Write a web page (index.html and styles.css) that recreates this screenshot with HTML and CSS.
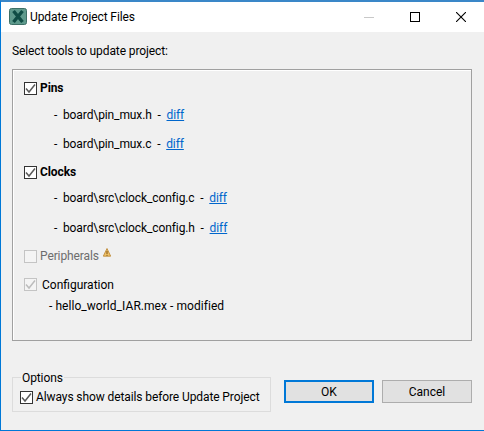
FILE: index.html
```html
<!DOCTYPE html>
<html lang="en">
<head>
    <meta charset="UTF-8">
    <title>Update Project Files</title>
    <link rel="stylesheet" href="styles.css">
</head>
<body>
    <div class="window">
        <div class="titlebar">
            <svg class="app-icon" width="18" height="17" viewBox="0 0 18 17">
                <rect x="0.5" y="0.5" width="17" height="16" rx="2" fill="#5e9a8c" stroke="#3d6f66"/>
                <path d="M4.5 3 L13.5 14 M13.5 3 L4.5 14" stroke="#0f4d45" stroke-width="3.4" fill="none"/>
            </svg>
            <span class="title">Update Project Files</span>
            <div class="win-buttons">
                <span class="win-btn"><svg width="10" height="10" viewBox="0 0 10 10"><path d="M0 5.5H10" stroke="#c8c8c8"/></svg></span>
                <span class="win-btn"><svg width="10" height="10" viewBox="0 0 10 10"><rect x="0.5" y="0.5" width="9" height="9" fill="none" stroke="#000"/></svg></span>
                <span class="win-btn"><svg width="10" height="10" viewBox="0 0 10 10"><path d="M0 0L10 10M10 0L0 10" stroke="#000" stroke-width="1.1"/></svg></span>
            </div>
        </div>

        <div class="content">
            <p class="intro">Select tools to update project:</p>

            <div class="tools">
                <div class="row check-row bold">
                    <span class="check"><svg width="13" height="13" viewBox="0 0 13 13"><path d="M2 6.5L5 10L11 2.5" stroke="#5a5a5a" stroke-width="1.5" fill="none"/></svg></span>
                    <span>Pins</span>
                </div>
                <div class="row file"><span>- &nbsp;board\pin_mux.h &nbsp;- &nbsp;<a href="#">diff</a></span></div>
                <div class="row file"><span>- &nbsp;board\pin_mux.c &nbsp;- &nbsp;<a href="#">diff</a></span></div>
                <div class="row check-row bold clocks">
                    <span class="check"><svg width="13" height="13" viewBox="0 0 13 13"><path d="M2 6.5L5 10L11 2.5" stroke="#5a5a5a" stroke-width="1.5" fill="none"/></svg></span>
                    <span>Clocks</span>
                </div>
                <div class="row file file-first"><span>- &nbsp;board\src\clock_config.c &nbsp;- &nbsp;<a href="#">diff</a></span></div>
                <div class="row file file-last"><span>- &nbsp;board\src\clock_config.h &nbsp;- &nbsp;<a href="#">diff</a></span></div>
                <div class="row check-row disabled">
                    <span class="check"></span>
                    <span>Peripherals</span>
                    <svg class="warn" width="8" height="9" viewBox="0 0 8 9"><path d="M4 0.5L7.7 8.2H0.3Z" fill="#f0c36a" stroke="#b9812c" stroke-width="0.8"/><path d="M4 3V6M4 6.8V7.8" stroke="#7a4f10"/></svg>
                </div>
                <div class="row check-row config">
                    <span class="check check-off"><svg width="13" height="13" viewBox="0 0 13 13"><path d="M2 6.5L5 10L11 2.5" stroke="#bcbcbc" stroke-width="1.5" fill="none"/></svg></span>
                    <span>Configuration</span>
                </div>
                <div class="row mex"><span>- hello_world_IAR.mex - modified</span></div>
            </div>

            <div class="footer">
                <div class="options">
                    <span class="legend">Options</span>
                    <div class="check-row always">
                        <span class="check"><svg width="13" height="13" viewBox="0 0 13 13"><path d="M2 6.5L5 10L11 2.5" stroke="#5a5a5a" stroke-width="1.5" fill="none"/></svg></span>
                        <span>Always show details before Update Project</span>
                    </div>
                </div>
                <button class="btn btn-default">OK</button>
                <button class="btn">Cancel</button>
            </div>
        </div>
    </div>
</body>
</html>
```

FILE: styles.css
```css
html, body {
    margin: 0;
    padding: 0;
}
body {
    width: 484px;
    height: 431px;
    overflow: hidden;
    font-family: Roboto, "Noto Sans", sans-serif;
    font-size: 12px;
    letter-spacing: -0.1px;
    color: #000;
    background-color: #f0f0f0;
}
.window {
    box-sizing: border-box;
    height: 431px;
    border-left: 1px solid #0078d7;
    border-top: 2px solid #3a87c8;
    border-bottom: 1px solid #0078d7;
}
.titlebar {
    height: 30px;
    background-color: #fff;
    display: flex;
    align-items: center;
    padding-left: 8px;
}
.app-icon {
    margin-right: 3px;
    margin-top: -1px;
}
.title {
    flex: 1;
}
.win-buttons {
    display: flex;
}
.win-btn {
    width: 46px;
    height: 30px;
    display: flex;
    align-items: center;
    justify-content: center;
}
.content {
    padding: 0 12px 0 11px;
}
.intro {
    margin: 0;
    height: 37px;
    line-height: 39px;
}
.tools {
    box-sizing: border-box;
    height: 272px;
    border: 1px solid #a0a0a0;
    box-shadow: inset 1px 1px 0 #fff;
    padding: 6px 0 0 11px;
}
.row {
    display: flex;
    align-items: center;
    white-space: nowrap;
    height: 24px;
}
.check-row {
    display: flex;
    align-items: center;
    white-space: nowrap;
}
.check {
    box-sizing: border-box;
    width: 13px;
    height: 13px;
    border: 1px solid #333;
    background-color: #fff;
    margin-right: 3px;
    display: flex;
    align-items: center;
    justify-content: center;
    flex-shrink: 0;
}
.check svg {
    flex-shrink: 0;
}
.bold {
    font-weight: bold;
}
.file {
    padding-left: 30px;
    height: 29px;
}
.file a {
    color: #0066cc;
}
.clocks {
    margin-top: 2px;
}
.file-first {
    height: 28px;
}
.file-last {
    height: 31px;
}
.disabled {
    margin-top: 1px;
    color: #6d6d6d;
}
.disabled .check, .check-off {
    border-color: #c4c4c4;
    background-color: #f4f4f4;
}
.warn {
    margin: -8px 0 0 4px;
}
.config {
    height: 29px;
    margin-top: 2px;
    letter-spacing: 0;
}
.config .check {
    margin-right: 5px;
}
.mex {
    padding-left: 25px;
    height: 14px;
    letter-spacing: 0.05px;
}
.footer {
    display: flex;
    align-items: flex-start;
    margin-top: 36px;
}
.options {
    box-sizing: border-box;
    position: relative;
    width: 259px;
    height: 35px;
    border: 1px solid #dcdcdc;
    padding: 12px 0 0 7px;
}
.legend {
    position: absolute;
    left: 8px;
    top: -8px;
    padding: 0 1px;
    line-height: 16px;
    background-color: #f0f0f0;
}
.btn {
    box-sizing: border-box;
    width: 90px;
    height: 23px;
    margin-top: 3px;
    padding: 0;
    font-family: inherit;
    font-size: 12px;
    color: #000;
    background-color: #e1e1e1;
    border: 1px solid #adadad;
}
.btn-default {
    margin-left: 13px;
    margin-right: 8px;
    border: 2px solid #0078d7;
}
```
